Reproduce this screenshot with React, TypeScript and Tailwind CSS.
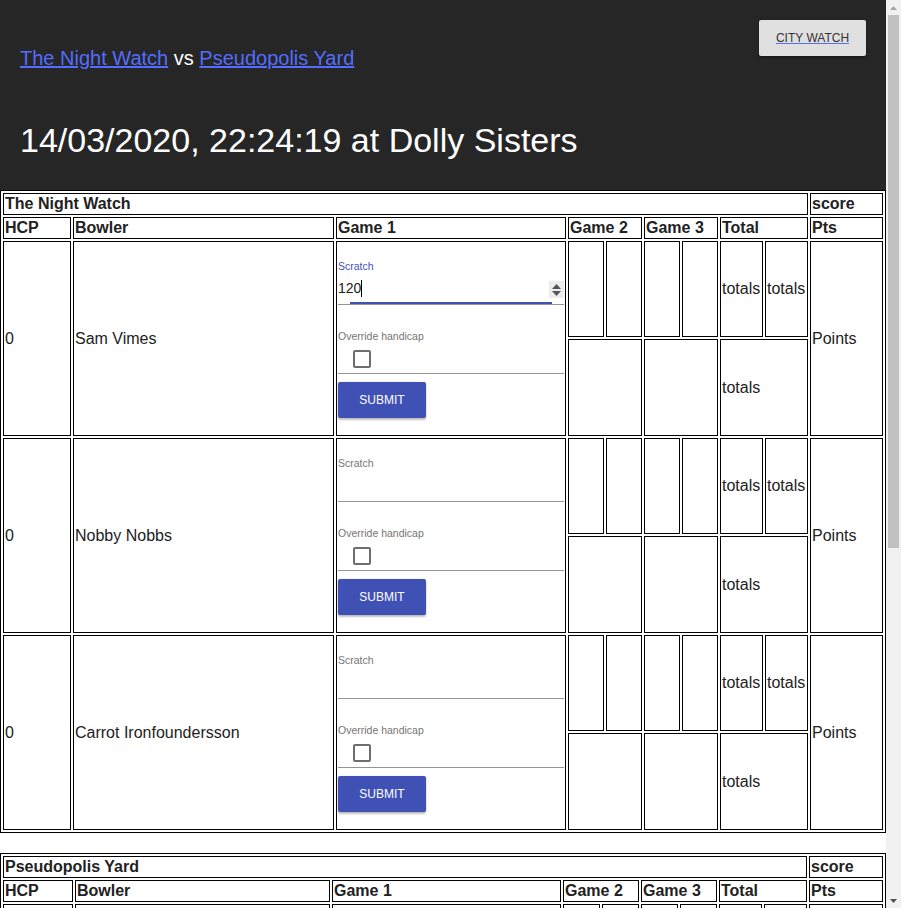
import React from 'react';

interface Bowler {
  name: string;
  hcp: number;
}

interface TeamTableProps {
  team: string;
  bowlers: Bowler[];
  cols: string;
  focusFirst?: boolean;
}

const nightWatch: Bowler[] = [
  { name: 'Sam Vimes', hcp: 0 },
  { name: 'Nobby Nobbs', hcp: 0 },
  { name: 'Carrot Ironfoundersson', hcp: 0 },
];

const pseudopolis: Bowler[] = [
  { name: 'Fred Colon', hcp: 0 },
  { name: 'Angua von Überwald', hcp: 0 },
  { name: 'Cheery Littlebottom', hcp: 0 },
];

const cellBase = 'border border-black p-px flex items-center min-w-0 overflow-hidden';
const headCell = `${cellBase} font-bold`;

const ScoreForm = ({ focused }: { focused?: boolean }) => (
  <div className="flex flex-col w-full self-stretch">
    {/* Scratch text field */}
    <div className="relative pt-[17px] border-b border-[#949494]">
      <div
        className={`text-[10.5px] leading-[13px] ${focused ? 'text-[#3f51b5]' : 'text-[#757575]'}`}
      >
        Scratch
      </div>
      <div className="h-[31px] flex items-center text-[14px] text-[#212121]">
        {focused && (
          <>
            <span>120</span>
            <span className="inline-block w-px h-[17px] bg-black" />
          </>
        )}
      </div>
      {focused && (
        <>
          <div className="absolute right-0 top-[38px] w-[15px] h-[17px] bg-[#ececec] flex flex-col items-center justify-center gap-[2px]">
            <svg width="9" height="5" viewBox="0 0 9 5">
              <path d="M0 5 L4.5 0 L9 5 Z" fill="#555" />
            </svg>
            <svg width="9" height="5" viewBox="0 0 9 5">
              <path d="M0 0 L4.5 5 L9 0 Z" fill="#555" />
            </svg>
          </div>
          <div className="absolute left-[12px] right-[12px] bottom-0 h-[2px] bg-[#3f51b5]" />
        </>
      )}
    </div>

    {/* Override handicap */}
    <div className="mt-[25px] h-[12px] overflow-hidden text-[10.5px] leading-[13px] text-[#757575]">
      Override handicap
    </div>
    <div className="pt-[8px] pb-[5px] pl-[15px] border-b border-[#949494]">
      <div className="w-[18px] h-[18px] border-2 border-[#6e6e6e] rounded-[2px]" />
    </div>

    <button className="mt-[8px] w-[88px] h-[36px] bg-[#3f51b5] text-white text-[12px] rounded-[2px] shadow-[0_2px_2px_rgba(0,0,0,0.24),0_0_2px_rgba(0,0,0,0.12)]">
      SUBMIT
    </button>
  </div>
);

const TeamTable = ({ team, bowlers, cols, focusFirst }: TeamTableProps) => (
  <div
    className={`grid ${cols} grid-rows-[22px_22px_96px_97px_96px_97px_96px_97px] gap-[2px] p-[2px] border border-black text-[16px] text-[#222]`}
  >
    <div className={`${headCell} col-span-9`}>{team}</div>
    <div className={headCell}>score</div>

    <div className={headCell}>HCP</div>
    <div className={headCell}>Bowler</div>
    <div className={headCell}>Game 1</div>
    <div className={`${headCell} col-span-2`}>Game 2</div>
    <div className={`${headCell} col-span-2`}>Game 3</div>
    <div className={`${headCell} col-span-2`}>Total</div>
    <div className={headCell}>Pts</div>

    {bowlers.map((b, i) => (
      <React.Fragment key={b.name}>
        <div className={`${cellBase} row-span-2`}>{b.hcp}</div>
        <div className={`${cellBase} row-span-2`}>{b.name}</div>
        <div className={`${cellBase} row-span-2 items-start`}>
          <ScoreForm focused={focusFirst && i === 0} />
        </div>
        <div className={cellBase} />
        <div className={cellBase} />
        <div className={cellBase} />
        <div className={cellBase} />
        <div className={cellBase}>totals</div>
        <div className={cellBase}>totals</div>
        <div className={`${cellBase} row-span-2`}>Points</div>

        <div className={`${cellBase} col-span-2`} />
        <div className={`${cellBase} col-span-2`} />
        <div className={`${cellBase} col-span-2`}>totals</div>
      </React.Fragment>
    ))}
  </div>
);

// classic browser scrollbar, drawn over the right edge
const Scrollbar = () => (
  <div className="fixed right-0 top-0 w-[15px] h-screen bg-[#f1f1f1]">
    <div className="h-[15px] flex items-center justify-center">
      <svg width="7" height="4" viewBox="0 0 7 4">
        <path d="M0 4 L3.5 0 L7 4 Z" fill="#a3a3a3" />
      </svg>
    </div>
    <div className="ml-[2px] w-[11px] h-[533px] bg-[#c1c1c1]" />
    <div className="absolute bottom-0 left-0 w-[15px] h-[15px] flex items-center justify-center">
      <svg width="7" height="4" viewBox="0 0 7 4">
        <path d="M0 0 L3.5 4 L7 0 Z" fill="#505050" />
      </svg>
    </div>
  </div>
);

export default function App() {
  return (
    <div className="font-['Liberation_Sans',Arial,sans-serif] bg-white min-h-screen">
      <div className="w-[886px]">
        <header className="h-[190px] bg-[#262626] px-5 pt-5 flex justify-between items-start">
          <div>
            <div className="mt-[27px] text-[20px] leading-[23px] text-white">
              <a href="#" className="text-[#536dfe] underline">
                The Night Watch
              </a>{' '}
              vs{' '}
              <a href="#" className="text-[#536dfe] underline">
                Pseudopolis Yard
              </a>
            </div>
            <h1 className="mt-[50px] text-[34px] leading-[40px] text-white">
              14/03/2020, 22:24:19 at Dolly Sisters
            </h1>
          </div>
          <button className="w-[107px] h-[36px] bg-[#e0e0e0] rounded-[2px] shadow-[0_2px_2px_rgba(0,0,0,0.24),0_0_2px_rgba(0,0,0,0.12)] text-[12px] text-[#333]">
            <span className="underline decoration-[#536dfe]">CITY WATCH</span>
          </button>
        </header>

        <TeamTable
          team="The Night Watch"
          bowlers={nightWatch}
          cols="grid-cols-[68px_261px_230px_36px_36px_36px_36px_43px_43px_73px]"
          focusFirst
        />

        <div className="mt-[20px]">
          <TeamTable
            team="Pseudopolis Yard"
            bowlers={pseudopolis}
            cols="grid-cols-[70px_255px_229px_37px_37px_37px_37px_43px_43px_74px]"
          />
        </div>
      </div>
      <Scrollbar />
    </div>
  );
}
